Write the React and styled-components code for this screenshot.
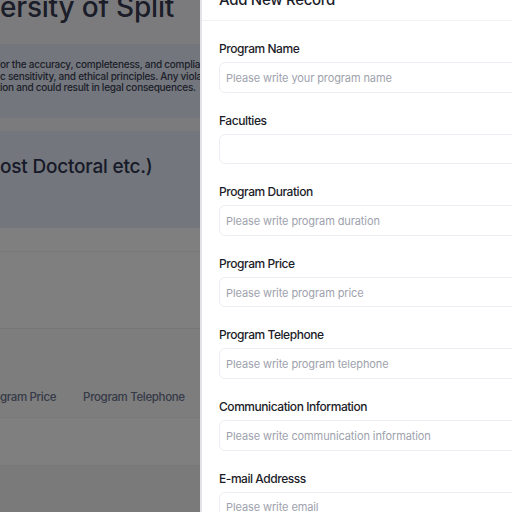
import React from "react";
import styled, { createGlobalStyle } from "styled-components";

const Global = createGlobalStyle`
  html, body { margin: 0; padding: 0; }
  body { font-family: Inter, "Noto Sans", sans-serif; background: #f6f7fa; overflow: hidden; }
  * { box-sizing: border-box; }
`;

const Page = styled.div`
  width: 512px;
  height: 512px;
  overflow: hidden;
  display: flex;
  flex-direction: column;
  background: #f6f7fa;
`;

const Clip = styled.div`
  display: flex;
  white-space: nowrap;
`;

const Hidden = styled.span`
  display: inline-flex;
  width: 0;
  justify-content: flex-end;
  & > span { flex-shrink: 0; }
`;

const Cut = ({ pre, text }) => (
  <Clip>
    <Hidden><span>{pre}</span></Hidden>
    <span>{text}</span>
  </Clip>
);

const Title = styled.h1`
  margin: -8px 0 0;
  height: 52px;
  font-size: 28px;
  font-weight: 500;
  line-height: 30px;
  color: #363b52;
  padding: 0;
  letter-spacing: -0.2px;
  flex-shrink: 0;
`;

const Panel = styled.div`
  background: #e6ecf8;
  height: ${(p) => p.$h}px;
  display: flex;
  flex-direction: column;
  justify-content: center;
  flex-shrink: 0;
`;

const Notice = styled.div`
  font-size: 10px;
  line-height: 11.5px;
  color: #3a3f55;
  font-weight: 500;
  letter-spacing: -0.25px;
  margin-top: -9px;
`;

const Strip = styled.div`
  height: 13px;
  flex-shrink: 0;
`;

const BigLine = styled.div`
  font-size: 19px;
  font-weight: 500;
  color: #2f3450;
  margin-top: -27px;
  letter-spacing: -0.2px;
`;

const TableArea = styled.div`
  background: #ffffff;
  flex: 1;
  display: flex;
  flex-direction: column;
`;

const Row = styled.div`
  height: ${(p) => p.$h}px;
  border-bottom: 1px solid ${(p) => p.$line || "#f1f2f4"};
  background: ${(p) => p.$bg || "transparent"};
  display: flex;
  align-items: ${(p) => (p.$bottom ? "flex-end" : "center")};
  padding-bottom: ${(p) => (p.$bottom ? "13px" : "0")};
  flex-shrink: 0;
`;

const HeadCells = styled.div`
  display: flex;
  gap: 27px;
  font-size: 11.5px;
  font-weight: 500;
  color: #6c7590;
  letter-spacing: -0.35px;
`;

const Rest = styled.div`
  flex: 1;
  background: #f4f4f5;
`;

const Overlay = styled.div`
  position: fixed;
  inset: 0;
  background: rgba(0, 0, 0, 0.5);
`;

const Drawer = styled.aside`
  position: fixed;
  top: 0;
  bottom: 0;
  left: 200px;
  right: -40px;
  background: #ffffff;
  border-left: 2px solid #e3e4e8;
  display: flex;
  flex-direction: column;
  overflow: hidden;
`;

const DrawerHeader = styled.div`
  height: 42px;
  margin-top: -21px;
  border-bottom: 1px solid #f0f2f6;
  display: flex;
  align-items: center;
  padding-left: 17px;
  font-size: 15px;
  font-weight: 500;
  color: #1c1d2a;
  letter-spacing: -0.3px;
  flex-shrink: 0;
`;

const Form = styled.div`
  display: grid;
  row-gap: 19px;
  padding: 19px 0 0 17px;
`;

const Field = styled.div`
  display: grid;
  grid-template-rows: 16px 30.6px;
  row-gap: 6px;
`;

const Label = styled.label`
  font-size: 12px;
  line-height: 18px;
  font-weight: 500;
  color: #1b1c28;
  letter-spacing: -0.45px;
`;

const Input = styled.input`
  width: 100%;
  height: 30.6px;
  border: 1px solid #eceef3;
  border-radius: 6px;
  padding: 1px 6px 0;
  font-family: Inter, "Noto Sans", sans-serif;
  font-size: 11px;
  color: #1b1c28;
  background: #fff;
  outline: none;
  letter-spacing: -0.1px;
  &::placeholder { color: #9ea2ad; }
`;

const fields = [
  ["Program Name", "Please write your program name"],
  ["Faculties", ""],
  ["Program Duration", "Please write program duration"],
  ["Program Price", "Please write program price"],
  ["Program Telephone", "Please write program telephone"],
  ["Communication Information", "Please write communication information"],
  ["E-mail Addresss", "Please write email"],
];

export default function App() {
  return (
    <>
      <Global />
      <Page>
        <Title>
          <Cut pre="Univ" text="ersity of Split" />
        </Title>
        <Panel $h={74}>
          <Notice>
            <Cut pre="You are fully responsible f" text="or the accuracy, completeness, and compliance of the data with academi" />
            <Cut pre="with academi" text="c sensitivity, and ethical principles. Any violation of these rules" />
            <Cut pre="is against the regulat" text="ion and could result in legal consequences." />
          </Notice>
        </Panel>
        <Strip />
        <Panel $h={97}>
          <BigLine>
            <Cut pre="(Undergraduate, Graduate, P" text="ost Doctoral etc.)" />
          </BigLine>
        </Panel>
        <TableArea>
          <Row $h={24} />
          <Row $h={77} $line="#ececee" />
          <Row $h={89} $bottom $bg="#fafafa">
            <HeadCells>
              <Cut pre="Pro" text="gram Price" />
              <span>Program Telephone</span>
            </HeadCells>
          </Row>
          <Row $h={48} />
          <Rest />
        </TableArea>
      </Page>
      <Overlay />
      <Drawer>
        <DrawerHeader>Add New Record</DrawerHeader>
        <Form>
          {fields.map(([label, ph]) => (
            <Field key={label}>
              <Label>{label}</Label>
              <Input placeholder={ph} />
            </Field>
          ))}
        </Form>
      </Drawer>
    </>
  );
}
